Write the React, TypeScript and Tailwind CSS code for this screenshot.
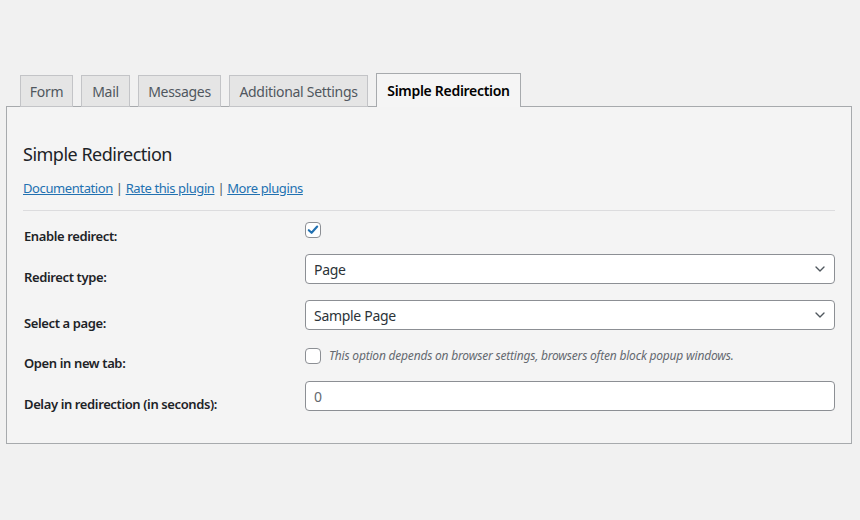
import { ChevronDown } from "lucide-react";

const tabs = [
  { name: "Form", w: "w-[53px]" },
  { name: "Mail", w: "w-[49px]" },
  { name: "Messages", w: "w-[83px]" },
  { name: "Additional Settings", w: "w-[139px]" },
];

function Checkbox({ checked }: { checked?: boolean }) {
  return (
    <span className="flex h-4 w-4 shrink-0 items-center justify-center rounded-[4px] border border-[#8c8f94] bg-white">
      {checked && (
        <svg viewBox="0 0 16 16" className="h-[14px] w-[14px]">
          <path d="M3.2 8.2 L6.4 11.2 L12.8 4" fill="none" stroke="#2271b1" strokeWidth="2.4" strokeLinecap="round" strokeLinejoin="round" />
        </svg>
      )}
    </span>
  );
}

function Select({ value }: { value: string }) {
  return (
    <div className="flex h-[30px] items-center justify-between rounded-[4px] border border-[#8c8f94] bg-white pl-[8px] pr-[6px] text-[14px] tracking-[-0.3px] text-[#2c3338]">
      <span>{value}</span>
      <ChevronDown className="h-4 w-4 text-[#50575e]" strokeWidth={2} />
    </div>
  );
}

const label = "w-[282px] shrink-0 pl-[1px] text-[13px] font-semibold leading-[18px] tracking-[-0.38px] text-[#1d2327]";

export default function App() {
  return (
    <div className="min-h-[520px] bg-[#f1f1f1] px-[6px] pt-[73px] font-['Noto_Sans',sans-serif] text-[#1d2327]">
      <div className="flex items-end gap-2 pl-[14px]">
        {tabs.map((t) => (
          <div
            key={t.name}
            className={`${t.w} mb-[-1px] flex h-[32px] items-center justify-center border border-[#c3c4c7] bg-[#e5e5e5] text-[14px] tracking-[-0.3px] text-[#50575e]`}
          >
            {t.name}
          </div>
        ))}
        <div className="relative z-10 mb-[-1px] flex h-[34px] w-[145px] items-center justify-center border border-b-0 border-[#a7aaad] bg-[#f5f5f5] pb-[1px] text-[14px] font-semibold tracking-[-0.3px] text-black">
          Simple Redirection
        </div>
      </div>

      <div className="h-[338px] w-[846px] border border-[#a7aaad] bg-[#f4f4f4] px-[16px] pt-[36px]">
        <h2 className="text-[18px] leading-[22px] tracking-[-0.5px] text-[#1d2327]">Simple Redirection</h2>
        <p className="mt-[14px] text-[13px] leading-[18px] tracking-[-0.4px] text-[#50575e]">
          <a className="text-[#2271b1] underline">Documentation</a> |{" "}
          <a className="text-[#2271b1] underline">Rate this plugin</a> |{" "}
          <a className="text-[#2271b1] underline">More plugins</a>
        </p>
        <div className="mt-[13px] border-t border-[#dcdcde]" />

        <div className="mt-[11px] flex flex-col">
          <div className="flex h-4 items-start">
            <div className={`${label} pt-[5px]`}>Enable redirect:</div>
            <Checkbox checked />
          </div>
          <div className="mt-4 flex h-[30px] items-start">
            <div className={`${label} pt-[14px]`}>Redirect type:</div>
            <div className="flex-1">
              <Select value="Page" />
            </div>
          </div>
          <div className="mt-4 flex h-[30px] items-start">
            <div className={`${label} pt-[14px]`}>Select a page:</div>
            <div className="flex-1">
              <Select value="Sample Page" />
            </div>
          </div>
          <div className="mt-[18px] flex h-4 items-start">
            <div className={`${label} pt-[6px]`}>Open in new tab:</div>
            <div className="flex h-4 items-center gap-2">
              <Checkbox />
              <span className="text-[12px] italic leading-[16px] tracking-[-0.2px] text-[#646970]">
                This option depends on browser settings, browsers often block popup windows.
              </span>
            </div>
          </div>
          <div className="mt-[17px] flex h-[30px] items-start">
            <div className={`${label} pt-[14px]`}>Delay in redirection (in seconds):</div>
            <div className="flex h-[30px] flex-1 items-center rounded-[4px] border border-[#8c8f94] bg-white px-[8px] text-[14px] text-[#646970]">
              0
            </div>
          </div>
        </div>
      </div>
    </div>
  );
}
